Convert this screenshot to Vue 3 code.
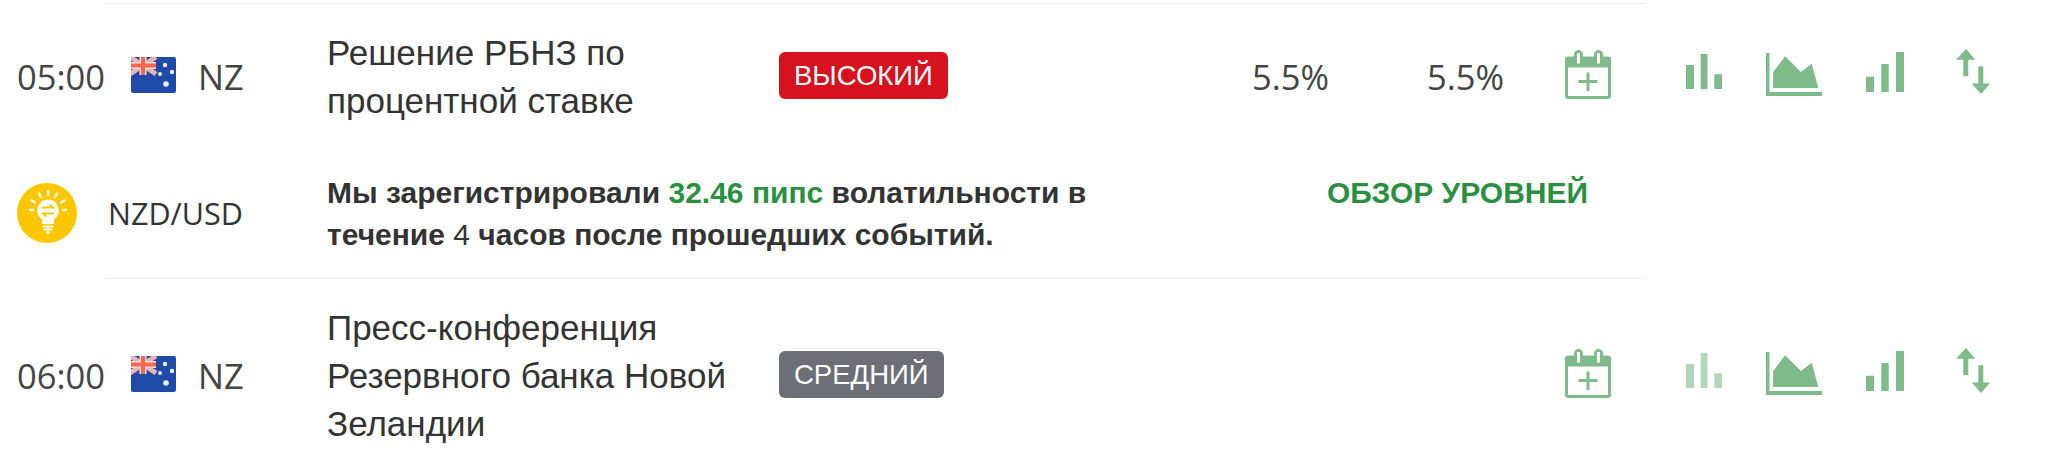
<template>
  <div class="calendar">
    <div class="rule"></div>
    <template v-for="(ev, i) in events" :key="i">
      <div class="row">
        <div class="time">{{ ev.time }}</div>
        <svg class="flag" width="45" height="36" viewBox="0 0 45 36">
          <defs>
            <filter id="soft" x="-10%" y="-10%" width="120%" height="120%">
              <feGaussianBlur stdDeviation="0.7" />
            </filter>
            <clipPath id="flagclip"><rect width="45" height="36" rx="2" /></clipPath>
          </defs>
          <g clip-path="url(#flagclip)">
            <rect width="45" height="36" fill="#1f4aa8" />
            <g filter="url(#soft)">
              <path d="M-1 0 L25 17 M25 0 L-1 17" stroke="#eab4b4" stroke-width="5" />
              <path d="M12 -1 V18 M-1 8.500 H25" stroke="#f9ddd8" stroke-width="7" />
              <path d="M12 -1 V18 M-1 8.500 H25" stroke="#f4684f" stroke-width="4" />
              <g fill="#e8edf8">
                <circle cx="34" cy="8" r="2.200" />
                <circle cx="41" cy="15" r="2.200" />
                <circle cx="29" cy="17" r="2" />
                <circle cx="35" cy="27" r="2.800" />
              </g>
            </g>
          </g>
        </svg>
        <div class="cc">{{ ev.cc }}</div>
        <div class="title">{{ ev.title }}</div>
        <div class="badge-cell"><span class="badge" :class="ev.level">{{ ev.impact }}</span></div>
        <div class="val">{{ ev.actual }}</div>
        <div class="val">{{ ev.forecast }}</div>
        <svg class="ic low" width="46" height="49" viewBox="0 0 46 49">
          <path fill="#7fbb8a" fill-rule="evenodd" d="M3 6.500 H9 V4.500 A4.500 4.500 0 0 1 18 4.500 V6.500 H29 V4.500 A4.500 4.500 0 0 1 38 4.500 V6.500 H43 A3 3 0 0 1 46 9.500 V46 A3 3 0 0 1 43 49 H3 A3 3 0 0 1 0 46 V9.500 A3 3 0 0 1 3 6.500 Z M3 17.500 V46 H43 V17.500 Z M12 3 V13.500 H15 V3 Z M32 3 V13.500 H35 V3 Z" />
          <path d="M23 22.500 V41 M13.500 31.500 H32.500" stroke="#7fbb8a" stroke-width="3" fill="none" />
        </svg>
        <svg class="ic high" :class="{ faded: ev.fadedBars }" width="36" height="35" viewBox="0 0 36 35">
          <path fill="#7fbb8a" d="M0 11 H8 V35 H0 Z M14.700 0 H21.500 V35 H14.700 Z M28.300 20.300 H36 V35 H28.300 Z" />
        </svg>
        <svg class="ic low" width="56" height="43" viewBox="0 0 56 43">
          <path fill="#7fbb8a" d="M0 0 H3.500 V39 H56 V43 H0 Z M7 19.300 L19 3.300 L35 19 L45.700 10.700 L52.300 35 H7 Z" />
        </svg>
        <svg class="ic high" width="38" height="40" viewBox="0 0 38 40">
          <path fill="#7fbb8a" d="M0 24.700 H8 V40 H0 Z M15.300 12 H22.700 V40 H15.300 Z M30 0 H38 V40 H30 Z" />
        </svg>
        <svg class="ic high" width="34" height="45" viewBox="0 0 34 45">
          <path fill="#7fbb8a" d="M10 0 L19.300 10.700 H12.300 V27.300 H7.300 V10.700 H0 Z M25 45 L15.700 34.500 H22.300 V17.300 H27.300 V34.500 H34.300 Z" />
        </svg>
      </div>
      <template v-if="ev.note">
        <div class="note">
          <div class="bulb">
            <svg width="60" height="60" viewBox="0 0 60 60">
              <circle cx="30" cy="30" r="30" fill="#fdc700" />
              <path fill="#fff" d="M31 16.500 A11 11 0 0 1 37 36.500 V41 H25 V36.500 A11 11 0 0 1 31 16.500 Z" />
              <path d="M25.500 43.500 H36.500 M26.500 46.500 H35.500 M29 49.500 H33" stroke="#fff" stroke-width="2" />
              <path d="M31 8.500 V12 M22 10.500 L24 14 M40 10.500 L38 14 M14.500 17.500 L18 19.500 M47.500 17.500 L44 19.500 M13 27 H16 M46 27 H49" stroke="#fff" stroke-width="2.500" stroke-linecap="round" />
              <path d="M25 24.500 H36 L33 21.500 M37 30.500 H26 L29 33.500" stroke="#fdc700" stroke-width="1.800" fill="none" />
            </svg>
          </div>
          <div class="pair">{{ ev.note.pair }}</div>
          <div class="note-text">
            Мы зарегистрировали <span class="green">{{ ev.note.pips }}</span> волатильности в<br />
            течение <span class="plain">4</span> часов после прошедших событий.
          </div>
          <div class="review">ОБЗОР УРОВНЕЙ</div>
        </div>
        <div class="rule"></div>
      </template>
    </template>
  </div>
</template>

<script setup>
const events = [
  {
    time: "05:00",
    cc: "NZ",
    title: "Решение РБНЗ по процентной ставке",
    impact: "ВЫСОКИЙ",
    level: "high",
    actual: "5.5%",
    forecast: "5.5%",
    note: { pair: "NZD/USD", pips: "32.46 пипс" }
  },
  {
    time: "06:00",
    cc: "NZ",
    title: "Пресс-конференция Резервного банка Новой Зеландии",
    impact: "СРЕДНИЙ",
    level: "mid",
    actual: "",
    forecast: "",
    fadedBars: true
  }
];
</script>

<style>
html,
body {
  overflow: hidden;
  background: #fff;
}
</style>

<style scoped>
.calendar {
  width: 2061px;
  padding-top: 3px;
  color: #333;
  font-family: "Liberation Sans", Arial, sans-serif;
}

.rule {
  width: 1540px;
  height: 1px;
  margin-left: 105px;
  background: #eee;
}

.row {
  display: grid;
  grid-template-columns: 114px 67px 129px 452px 473px 175px 138px 121px 80px 100px 90px 35px;
  align-items: center;
  padding: 24px 0 24px 17px;
}

.time,
.cc,
.val {
  font-family: "Open Sans", sans-serif;
  font-size: 34.5px;
  font-weight: 400;
  color: #444;
}

.flag {
  margin-bottom: 3px;
}

.title {
  width: 430px;
  margin: 1px 0 -1px;
  font-size: 35px;
  line-height: 48px;
}

.badge-cell {
  display: flex;
  margin-bottom: 2px;
}

.badge {
  padding: 0 15px;
  border-radius: 6px;
  color: #fff;
  font-size: 27.5px;
  line-height: 47px;
}

.badge.high {
  background: #d5121e;
}

.badge.mid {
  background: #6d6e76;
}

.ic.low {
  margin-bottom: 3px;
}

.ic.high {
  margin-bottom: 9px;
}

.ic.faded {
  opacity: 0.6;
}

.note {
  display: flex;
  align-items: center;
  height: 130px;
  padding-left: 17px;
}

.bulb {
  width: 91px;
  height: 60px;
}

.pair {
  width: 219px;
  font-family: "Open Sans", sans-serif;
  font-size: 30.5px;
}

.note-text {
  width: 1000px;
  padding-top: 2px;
  font-size: 30px;
  font-weight: 700;
  line-height: 42px;
}

.green {
  color: #2a8f3f;
}

.plain {
  font-weight: 400;
}

.review {
  align-self: flex-start;
  margin-top: 28px;
  color: #2a8f3f;
  font-size: 30px;
  font-weight: 700;
}
</style>
